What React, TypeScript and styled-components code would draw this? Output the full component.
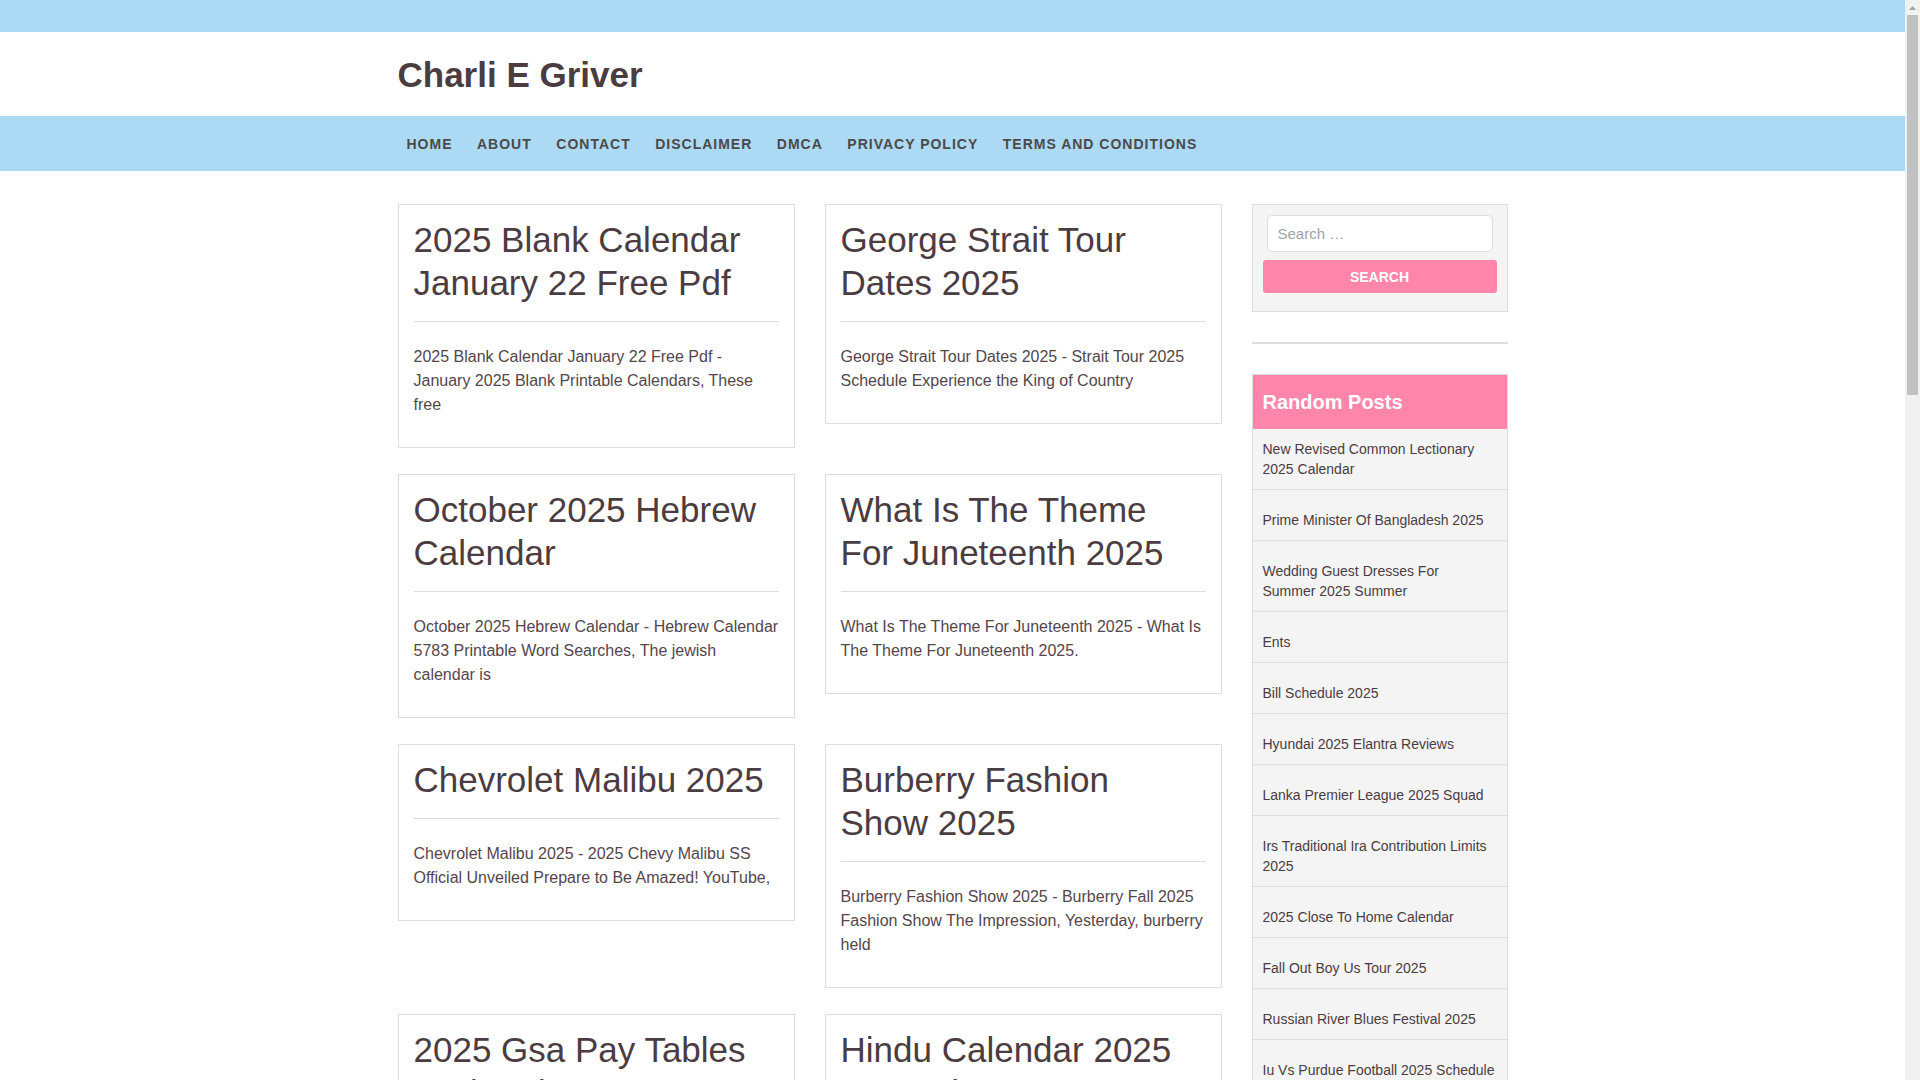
import React from "react";
import styled, { createGlobalStyle } from "styled-components";

const GlobalStyle = createGlobalStyle`
  html, body {
    margin: 0;
    padding: 0;
    background: #ffffff;
    overflow: hidden;
  }
  body {
    font-family: "Liberation Sans", Arial, sans-serif;
    color: #4b3c42;
  }
  * { box-sizing: border-box; }
`;

const Page = styled.div`
  height: 100vh;
  margin-right: 15px;
  overflow: hidden;
`;

const ScrollTrack = styled.div`
  position: fixed;
  top: 0;
  right: 0;
  width: 15px;
  height: 100vh;
  background: #f1f1f1;
  display: flex;
  flex-direction: column;
  align-items: center;
`;

const ScrollArrow = styled.div`
  width: 15px;
  height: 15px;
  display: flex;
  align-items: center;
  justify-content: center;
`;

const ScrollThumb = styled.div`
  width: 11px;
  height: 380px;
  background: #c1c1c1;
`;

const TopBar = styled.div`
  height: 32px;
  background: #acd9f3;
`;

const Container = styled.div`
  max-width: 1140px;
  margin: 0 auto;
  padding: 0 15px;
`;

const Header = styled.header`
  height: 84px;
  background: #ffffff;
  display: flex;
  align-items: center;
`;

const SiteTitle = styled.a`
  font-size: 35px;
  font-weight: 700;
  color: #4b3c42;
  text-decoration: none;
  line-height: 1;
`;

const NavBar = styled.nav`
  height: 55px;
  background: #acd9f3;
`;

const NavList = styled.ul`
  list-style: none;
  margin: 0 0 0 -1px;
  padding: 0;
  height: 55px;
  display: flex;
  align-items: center;
`;

const NavItem = styled.li`
  padding: 0 10px;
  margin-right: 4.5px;
  font-size: 14px;
  font-weight: 700;
  letter-spacing: 1px;
  text-transform: uppercase;
  color: #4a4a4a;
`;

const Layout = styled.div`
  display: grid;
  grid-template-columns: 824px 256px;
  column-gap: 30px;
  padding-top: 33px;
  align-items: start;
`;

const PostGrid = styled.div`
  display: grid;
  grid-template-columns: 1fr 1fr;
  column-gap: 30px;
  row-gap: 26px;
  align-items: start;
`;

const Card = styled.article`
  background: #ffffff;
  border: 1px solid #dddddd;
  padding: 13px 15px 30px;
`;

const CardTitle = styled.h2`
  margin: 0;
  padding-bottom: 17px;
  border-bottom: 1px solid #dddddd;
  font-size: 35px;
  font-weight: 400;
  line-height: 43px;
  color: #4b3c42;
`;

const Excerpt = styled.p`
  margin: 23px 0 0;
  font-size: 16px;
  line-height: 24px;
  color: #54464c;
`;

const Sidebar = styled.aside`
  display: flex;
  flex-direction: column;
`;

const SearchBox = styled.div`
  border: 1px solid #dddddd;
  background: #f4f4f4;
  padding: 10px 10px 18px;
  display: flex;
  flex-direction: column;
`;

const SearchInput = styled.input`
  margin: 0 4px;
  height: 37px;
  border: 1px solid #dddddd;
  border-radius: 5px;
  background: #ffffff;
  padding: 0 10px;
  font-family: "Liberation Sans", Arial, sans-serif;
  font-size: 15px;
  color: #4b3c42;
  outline: none;
  &::placeholder {
    color: #9aa5a6;
  }
`;

const SearchButton = styled.button`
  margin-top: 8px;
  height: 33px;
  border: none;
  border-radius: 3px;
  background: #ff85ab;
  color: #ffffff;
  font-family: "Liberation Sans", Arial, sans-serif;
  font-size: 14px;
  font-weight: 700;
  text-transform: uppercase;
  cursor: pointer;
`;

const Divider = styled.hr`
  margin: 30px 0;
  height: 2px;
  border: none;
  background: #dddddd;
`;

const Widget = styled.section`
  border: 1px solid #dddddd;
  border-bottom: none;
  background: #f4f4f4;
`;

const WidgetTitle = styled.h3`
  margin: 0;
  height: 54px;
  padding: 0 10px;
  display: flex;
  align-items: center;
  background: #ff85ab;
  color: #ffffff;
  font-size: 20px;
  font-weight: 700;
`;

const PostList = styled.ul`
  list-style: none;
  margin: 0;
  padding: 0;
`;

const PostItem = styled.li`
  padding: 20px 11.5px 10px 10px;
  border-bottom: 1px solid #dddddd;
  font-size: 14px;
  line-height: 20px;
  color: #4b3c42;
  &:first-child {
    padding-top: 10px;
  }
`;

const navLinks = [
  "Home",
  "About",
  "Contact",
  "Disclaimer",
  "DMCA",
  "Privacy Policy",
  "Terms and Conditions",
];

const posts = [
  {
    title: "2025 Blank Calendar January 22 Free Pdf",
    excerpt:
      "2025 Blank Calendar January 22 Free Pdf - January 2025 Blank Printable Calendars, These free",
  },
  {
    title: "George Strait Tour Dates 2025",
    excerpt:
      "George Strait Tour Dates 2025 - Strait Tour 2025 Schedule Experience the King of Country",
  },
  {
    title: "October 2025 Hebrew Calendar",
    excerpt:
      "October 2025 Hebrew Calendar - Hebrew Calendar 5783 Printable Word Searches, The jewish calendar is",
  },
  {
    title: "What Is The Theme For Juneteenth 2025",
    excerpt:
      "What Is The Theme For Juneteenth 2025 - What Is The Theme For Juneteenth 2025.",
  },
  {
    title: "Chevrolet Malibu 2025",
    excerpt:
      "Chevrolet Malibu 2025 - 2025 Chevy Malibu SS Official Unveiled Prepare to Be Amazed! YouTube,",
  },
  {
    title: "Burberry Fashion Show 2025",
    excerpt:
      "Burberry Fashion Show 2025 - Burberry Fall 2025 Fashion Show The Impression, Yesterday, burberry held",
  },
  {
    title: "2025 Gsa Pay Tables Updated",
    excerpt:
      "2025 Gsa Pay Tables Updated - 2025 General Schedule Pay Tables, The new pay tables are",
  },
  {
    title: "Hindu Calendar 2025 November",
    excerpt:
      "Hindu Calendar 2025 November - Hindu Calendar 2025 November Festivals, Vrat and holidays",
  },
];

const randomPosts = [
  "New Revised Common Lectionary 2025 Calendar",
  "Prime Minister Of Bangladesh 2025",
  "Wedding Guest Dresses For Summer 2025 Summer",
  "Ents",
  "Bill Schedule 2025",
  "Hyundai 2025 Elantra Reviews",
  "Lanka Premier League 2025 Squad",
  "Irs Traditional Ira Contribution Limits 2025",
  "2025 Close To Home Calendar",
  "Fall Out Boy Us Tour 2025",
  "Russian River Blues Festival 2025",
  "Iu Vs Purdue Football 2025 Schedule",
  "Lsu Baseball Schedule 2025",
];

export default function App() {
  return (
    <>
      <GlobalStyle />
      <Page>
        <TopBar />
        <Container>
          <Header>
            <SiteTitle href="#">Charli E Griver</SiteTitle>
          </Header>
        </Container>
        <NavBar>
          <Container>
            <NavList>
              {navLinks.map((l) => (
                <NavItem key={l}>{l}</NavItem>
              ))}
            </NavList>
          </Container>
        </NavBar>
        <Container>
          <Layout>
            <PostGrid>
              {posts.map((p) => (
                <Card key={p.title}>
                  <CardTitle>{p.title}</CardTitle>
                  <Excerpt>{p.excerpt}</Excerpt>
                </Card>
              ))}
            </PostGrid>
            <Sidebar>
              <SearchBox>
                <SearchInput type="search" placeholder="Search …" />
                <SearchButton type="button">Search</SearchButton>
              </SearchBox>
              <Divider />
              <Widget>
                <WidgetTitle>Random Posts</WidgetTitle>
                <PostList>
                  {randomPosts.map((r) => (
                    <PostItem key={r}>{r}</PostItem>
                  ))}
                </PostList>
              </Widget>
            </Sidebar>
          </Layout>
        </Container>
      </Page>
      <ScrollTrack>
        <ScrollArrow>
          <svg width="7" height="4" viewBox="0 0 7 4">
            <path d="M0 4 L3.5 0 L7 4 Z" fill="#a3a3a3" />
          </svg>
        </ScrollArrow>
        <ScrollThumb />
      </ScrollTrack>
    </>
  );
}
